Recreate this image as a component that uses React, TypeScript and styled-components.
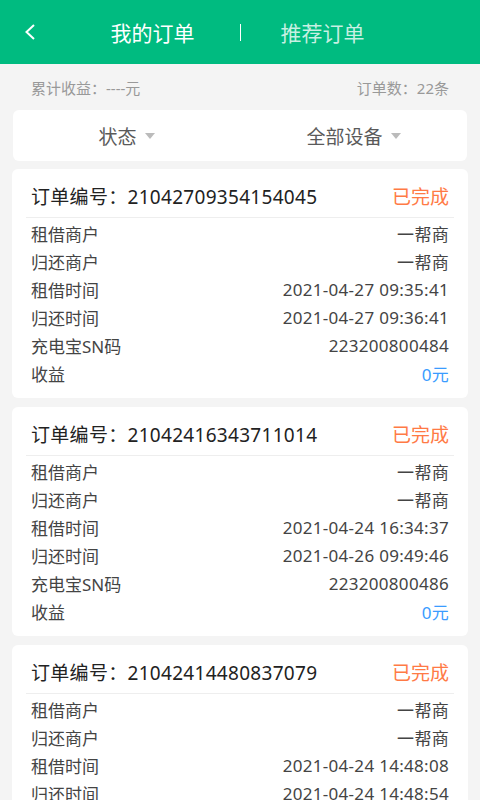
import React from "react";
import styled, { createGlobalStyle } from "styled-components";

const GlobalStyle = createGlobalStyle`
	html, body {
		margin: 0;
		padding: 0;
		background: #f4f4f4;
		font-family: "Noto Sans", "Noto Sans CJK SC", sans-serif;
	}
`;

const Page = styled.div`
	display: flex;
	flex-direction: column;
	width: 480px;
	min-height: 800px;
	background: #f4f4f4;
`;

const NavBar = styled.div`
	position: relative;
	display: flex;
	align-items: center;
	justify-content: center;
	height: 64px;
	padding-right: 5px;
	background: #00bb80;
`;

const BackButton = styled.div`
	position: absolute;
	left: 24px;
	top: 24px;
	width: 12px;
	height: 16px;
	display: flex;
`;

const Tab = styled.div<{ $active?: boolean }>`
	font-size: 21px;
	color: ${(p) => (p.$active ? "#ffffff" : "rgba(255,255,255,0.78)")};
`;

const TabDivider = styled.div`
	width: 1px;
	height: 17px;
	background: #ffffff;
	margin: 0 40px 0 45px;
`;

const Stats = styled.div`
	display: flex;
	justify-content: space-between;
	align-items: center;
	height: 46px;
	padding: 0 31px;
	font-size: 15px;
	color: #999;
`;

const FilterCard = styled.div`
	display: flex;
	margin: 0 13px;
	height: 51px;
	background: #fff;
	border-radius: 6px;
`;

const FilterItem = styled.div`
	flex: 1;
	display: flex;
	align-items: center;
	justify-content: center;
	gap: 8px;
	font-size: 19px;
	color: #5a5a5a;
`;

const Caret = styled.span`
	width: 0;
	height: 0;
	border-left: 5.5px solid transparent;
	border-right: 5.5px solid transparent;
	border-top: 6px solid #bbb;
	margin-top: 1px;
`;

const List = styled.div`
	display: flex;
	flex-direction: column;
	gap: 9px;
	padding: 8px 12px;
`;

const Card = styled.div`
	background: #fff;
	border-radius: 6px;
	padding: 0 14px 11px;
	letter-spacing: 0.3px;
`;

const CardHead = styled.div`
	display: flex;
	justify-content: space-between;
	align-items: center;
	height: 49px;
	box-sizing: border-box;
	padding: 6px 5px 0;
	border-bottom: 1px solid #eeeeee;
	margin-bottom: 1px;
`;

const OrderNo = styled.div`
	font-size: 19px;
	color: #222;
`;

const Status = styled.div`
	font-size: 19px;
	letter-spacing: 0;
	color: #ff7a45;
`;

const Row = styled.div`
	display: flex;
	justify-content: space-between;
	align-items: center;
	height: 28px;
	padding: 0 5px;
	font-size: 17px;
	color: #444;
`;

const Label = styled.span`
	letter-spacing: 0;
`;

const Value = styled.span<{ $accent?: boolean }>`
	color: ${(p) => (p.$accent ? "#3a9cff" : "#444")};
`;

const orders = [
	{
		no: "21042709354154045",
		rent: "2021-04-27 09:35:41",
		back: "2021-04-27 09:36:41",
		sn: "223200800484",
	},
	{
		no: "21042416343711014",
		rent: "2021-04-24 16:34:37",
		back: "2021-04-26 09:49:46",
		sn: "223200800486",
	},
	{
		no: "21042414480837079",
		rent: "2021-04-24 14:48:08",
		back: "2021-04-24 14:48:54",
		sn: "223200800481",
	},
];

function App() {
	return (
		<Page>
			<GlobalStyle />
			<NavBar>
				<BackButton>
					<svg width="12" height="16" viewBox="0 0 12 16">
						<path
							d="M10 1 L2.5 8 L10 15"
							fill="none"
							stroke="#fff"
							strokeWidth="2"
						/>
					</svg>
				</BackButton>
				<Tab $active>我的订单</Tab>
				<TabDivider />
				<Tab>推荐订单</Tab>
			</NavBar>
			<Stats>
				<span>累计收益：----元</span>
				<span>订单数：22条</span>
			</Stats>
			<FilterCard>
				<FilterItem>
					状态 <Caret />
				</FilterItem>
				<FilterItem>
					全部设备 <Caret />
				</FilterItem>
			</FilterCard>
			<List>
				{orders.map((o) => (
					<Card key={o.no}>
						<CardHead>
							<OrderNo>订单编号：{o.no}</OrderNo>
							<Status>已完成</Status>
						</CardHead>
						<Row>
							<Label>租借商户</Label>
							<Value>一帮商</Value>
						</Row>
						<Row>
							<Label>归还商户</Label>
							<Value>一帮商</Value>
						</Row>
						<Row>
							<Label>租借时间</Label>
							<Value>{o.rent}</Value>
						</Row>
						<Row>
							<Label>归还时间</Label>
							<Value>{o.back}</Value>
						</Row>
						<Row>
							<Label>充电宝SN码</Label>
							<Value>{o.sn}</Value>
						</Row>
						<Row>
							<Label>收益</Label>
							<Value $accent>0元</Value>
						</Row>
					</Card>
				))}
			</List>
		</Page>
	);
}

export default App;
